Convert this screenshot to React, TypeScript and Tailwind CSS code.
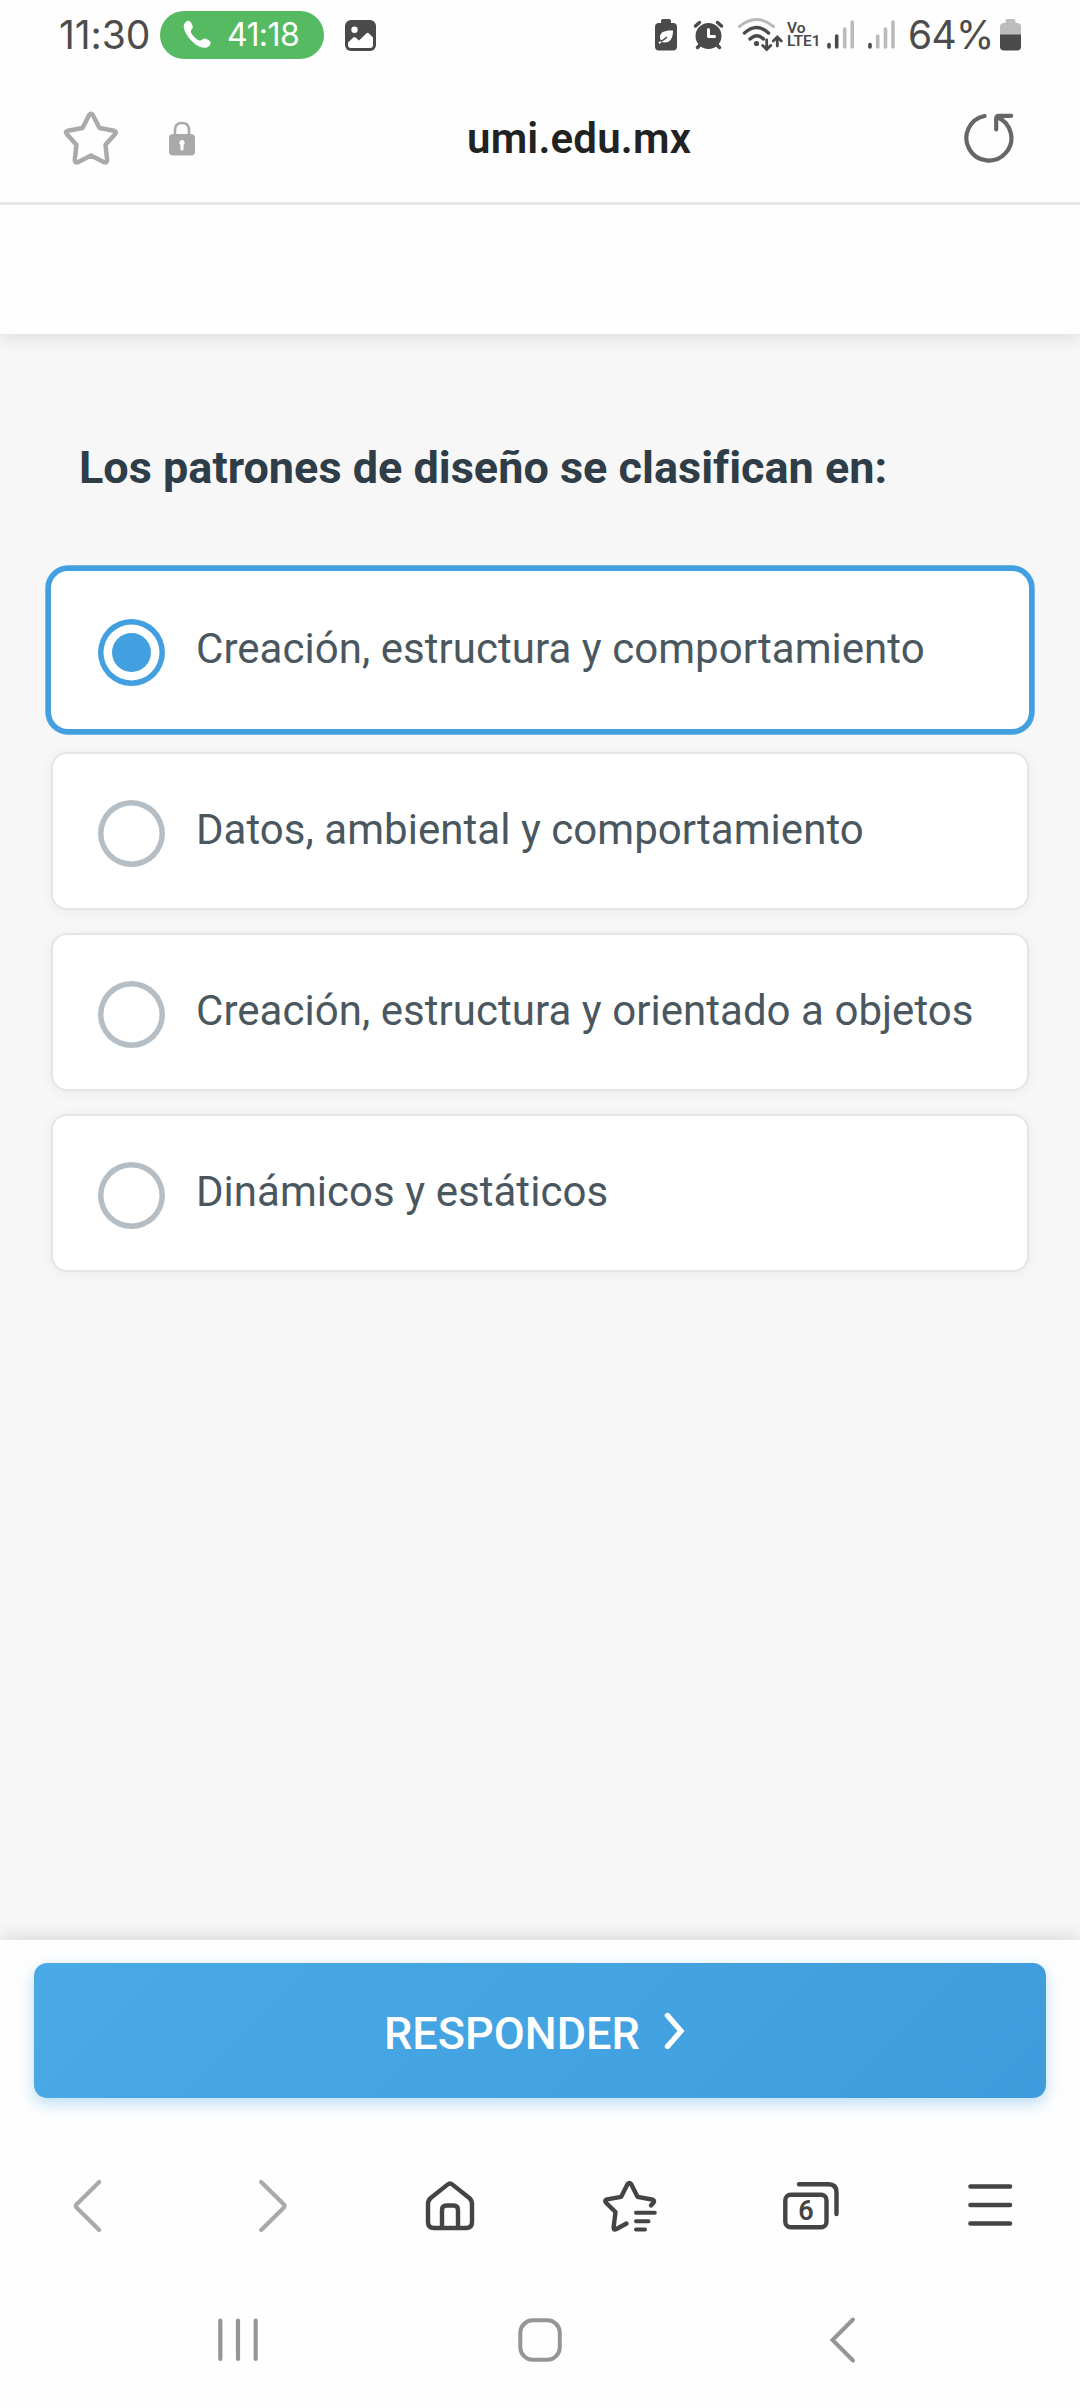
import React from "react";

const INK = "#4a4a4a";

function StatusBar() {
  return (
    <div className="flex h-[70px] shrink-0 items-start font-['Inter',sans-serif] text-[#4c4c4c]">
      <span className="ml-[59px] mt-[11px] w-[101px] whitespace-nowrap text-[39px] leading-[48px] font-normal tracking-[-0.1px]">11:30</span>
      <div className="mt-[11px] flex h-12 w-[164px] items-center rounded-full bg-[#56ba62] text-white">
        <svg className="ml-[22px] h-[30px] w-[30px]" viewBox="0 0 30 30" fill="#fff">
          <path d="M2 4.5C3 2 5.5.3 7.3 1c1.700.7 3.700 4.700 3.500 6.500-.2 1.500-2.200 2.400-2 4 .4 3 6 8.700 9 9 1.600.2 2.600-1.900 4.200-2.100 1.800-.2 5.900 1.800 6.500 3.500.6 2-1.300 4.500-3.500 5.500-3.500 1.500-9.500-.7-14.500-5.700C4.500 16 .5 8.500 2 4.500Z" />
        </svg>
        <span className="ml-[15px] text-[32px] leading-[48px] font-normal tracking-[-0.6px]">41:18</span>
      </div>
      <svg className="ml-[21px] mt-[20px] h-[31px] w-[31px]" viewBox="0 0 31 31">
        <rect width="31" height="31" rx="6" fill={INK} />
        <circle cx="9.500" cy="9.800" r="3.200" fill="#fff" />
        <path d="M3 22.500 8.600 17.300q1-.8 2 .1l3.400 3.200 7.500-7.400q1.200-1 2.300.1L28 17.500V25q0 3-3 3H6q-3 0-3-3Z" fill="#fff" />
      </svg>
      <div className="ml-auto flex items-start">
        <svg className="mt-[19px] h-8 w-[22px]" viewBox="0 0 22 32">
          <path d="M6 4V2q0-2 2-2h6q2 0 2 2v2h2q4 0 4 4v19.500q0 4-4 4H4q-4 0-4-4V8q0-4 4-4Z" fill={INK} />
          <path d="M18 11.500C10 11 5 13 5 18q0 2 1 3.500l-2.500 2 .8 1.500L7 23c5 1.500 11 0 11-11.500Z" fill="#fff" />
          <path d="M5.500 22.500q3.500-1.500 6.500-4.500" fill="none" stroke={INK} strokeWidth="1.500" />
        </svg>
        <svg className="ml-[16px] mt-[20px] h-[30px] w-[31px]" viewBox="0 0 31 30" fill="none" stroke={INK} strokeLinecap="round">
          <circle cx="15.500" cy="16" r="13" fill={INK} stroke="none" />
          <path d="m2.500 6 4-3.500M24.500 2.500l4 3.500M4.500 27.500l3-3M26.500 27.500l-3-3" strokeWidth="3.500" />
          <path d="M15.500 9.500v7h6" stroke="#fff" strokeWidth="3" strokeLinejoin="round" />
        </svg>
        <svg className="ml-[13px] mt-[17px] h-9 w-[46px]" viewBox="737 17 46 36" fill="none" strokeLinecap="round" strokeWidth="3">
          <path d="M739.500 26.500Q756.500 12.500 773.500 26.500" stroke="#b8b8b8" />
          <path d="M744.500 33Q756.500 22 768.500 33M750 39q7-6.500 13.500 0" stroke={INK} strokeWidth="3.400" />
          <circle cx="756.500" cy="43.500" r="2.600" fill={INK} />
          <path d="M766.700 40v9m-4-3.500 4 4 4-4M777.300 46v-8.500m-4 3.500 4-4 4 4" stroke={INK} strokeWidth="2.800" />
        </svg>
        <span className="ml-[4px] mt-[22px] w-[34px] font-['Roboto',sans-serif] text-[15.500px] leading-[13px] font-semibold">
          Vo
          <br />
          LTE1
        </span>
        <svg className="ml-[6px] mt-[19px] h-[31px] w-[68px]" viewBox="827 19 68 31" fill="none" strokeLinecap="round" strokeWidth="3.600">
          <path d="M829 44.500V47M836.700 36v11M870 44.500V47" stroke={INK} />
          <path d="M844.700 29v18M852.200 22v25M877.700 36v11M885.500 29v18M893 22v25" stroke="#bababa" />
        </svg>
        <span className="ml-[13px] mt-[11px] w-[88px] whitespace-nowrap text-[39px] leading-[48px] font-normal tracking-[-0.700px]">64%</span>
        <svg className="mr-[59px] ml-[4px] mt-[19px] h-8 w-[21px]" viewBox="0 0 21 32">
          <path d="M5.500 4V2q0-2 2-2h6q2 0 2 2v2H17q4 0 4 4v8H0V8q0-4 4-4Z" fill="#bdbdbd" />
          <path d="M0 15.500h21v12q0 4-4 4H4q-4 0-4-4Z" fill={INK} />
        </svg>
      </div>
    </div>
  );
}

function AddressBar() {
  return (
    <div className="relative z-20 flex h-[135px] shrink-0 items-start border-b-[3px] border-[#e6e6e6] bg-[#fefefe]">
      <svg className="ml-[62px] mt-[40px] h-[58px] w-[58px]" viewBox="62 110 58 58" fill="none" stroke="#a9abaa" strokeWidth="4.500" strokeLinejoin="round">
        <path d="M89.200 115q1.800-2.600 3.600 0l6.700 13 14.700 2.800q3 .8 1 3.200L105.500 144.700l1.600 15.300q0 3.200-3 2.200L91 155.500l-13.200 6.700q-3 1-3-2.200l1.600-15.300L66.700 134q-2-2.400 1-3.200L82.500 128Z" />
      </svg>
      <svg className="ml-[49px] mt-[51px] h-[35px] w-[26px]" viewBox="0 0 26 35">
        <path d="M6 15V9q0-7 7-7t7 7v6" fill="none" stroke="#a9a9a9" strokeWidth="2.600" />
        <rect y="13" width="26" height="21.500" rx="4" fill="#a9a9a9" />
        <path d="M13 19a2.800 2.800 0 0 1 1.600 5v4a1.600 1.600 0 0 1-3.200 0v-4A2.800 2.800 0 0 1 13 19Z" fill="#fff" />
      </svg>
      <span className="ml-[272px] mt-[44px] w-[226px] whitespace-nowrap font-['Roboto',sans-serif] text-[42px] leading-[50px] font-semibold tracking-[0.200px] text-[#222]">umi.edu.mx</span>
      <svg className="ml-auto mr-[64px] mt-[41px] h-[54px] w-[54px]" viewBox="962 111 54 54" fill="none" stroke="#666" strokeWidth="4.200" strokeLinecap="round">
        <path d="M984.500 116A22.500 22.500 0 1 0 998 117.500" />
        <path d="M996.200 129.500V118.500q0-2.700 2.700-2.700h12.300" strokeLinejoin="round" />
      </svg>
    </div>
  );
}

const answers = [
  "Creación, estructura y comportamiento",
  "Datos, ambiental y comportamiento",
  "Creación, estructura y orientado a objetos",
  "Dinámicos y estáticos",
];

function Answer({ label, selected }: { label: string; selected: boolean }) {
  return (
    <label
      className={
        selected
          ? "flex h-[158px] items-start rounded-[17px] bg-white shadow-[0_0_0_5.7px_#43a0e0]"
          : "flex h-[158px] items-start rounded-[16px] border-2 border-[#e5e5e5] bg-white shadow-[0_2px_14px_rgba(0,0,0,0.05)]"
      }
    >
      <span
        className={
          selected
            ? "mt-12 ml-[47px] flex h-[67px] w-[67px] items-center justify-center rounded-full shadow-[inset_0_0_0_5.5px_#43a0e0]"
            : "mt-[46px] ml-[45px] h-[67px] w-[67px] rounded-full shadow-[inset_0_0_0_5.5px_#b5bec5]"
        }
      >
        {selected && <span className="h-[39px] w-[39px] rounded-full bg-[#43a0e0]" />}
      </span>
      <span
        className={
          selected
            ? "mt-[53px] ml-[31px] whitespace-nowrap text-[42px] leading-[50px] tracking-[0.040px] text-[#4a575f]"
            : "mt-[51px] ml-[31px] whitespace-nowrap text-[42px] leading-[50px] tracking-[0.040px] text-[#4a575f]"
        }
      >
        {label}
      </span>
    </label>
  );
}

function BrowserToolbar() {
  return (
    <div className="relative z-20 flex h-[75px] shrink-0 items-center bg-[#fefefe] pl-[72px]">
      <svg className="h-14 w-8" viewBox="72 2178 32 56" fill="none" stroke="#a9a9a9" strokeWidth="4.200" strokeLinecap="round" strokeLinejoin="round">
        <path d="m99.200 2182-22.500 22.200q-1.600 1.800 0 3.600L99.200 2230" />
      </svg>
      <svg className="ml-[153px] h-14 w-8" viewBox="257 2178 32 56" fill="none" stroke="#a9a9a9" strokeWidth="4.200" strokeLinecap="round" strokeLinejoin="round">
        <path d="m261.200 2182 22.500 22.200q1.600 1.800 0 3.600L261.200 2230" />
      </svg>
      <svg className="ml-[135px] h-14 w-[52px]" viewBox="424 2178 52 56" fill="none" stroke="#444" strokeWidth="4.400">
        <path d="M447.500 2184.600q2.500-2 5 0l16.800 13.400q2.700 2.300 2.700 6v18q0 6-6 6h-32q-6 0-6-6v-18q0-3.700 2.700-6Z" strokeLinejoin="round" />
        <path d="M442 2227v-17q0-4.500 4.500-4.500h7q4.500 0 4.500 4.500v17" />
      </svg>
      <svg className="ml-[124px] h-14 w-[60px]" viewBox="600 2178 60 56" fill="none" stroke="#444" strokeWidth="4.400" strokeLinecap="round" strokeLinejoin="round">
        <path d="m626.500 2223.500-10.500 5.700q-2.400 1-2.400-1.600l1.900-15.600-9.500-9.300q-2-2.400 1-3.300l14.200-2.600 6.400-12.700q1.700-2.400 3.500 0l6.400 12.700 14.300 2.700q3.500.9 1.700 3.300l-2.500 2.600" />
        <path d="M636 2212.700h18.800M636 2221.200h12.500M636 2229.600h9" strokeWidth="4" />
      </svg>
      <div className="relative ml-[121px] h-14 w-[60px]">
        <svg className="h-14 w-[60px]" viewBox="781 2178 60 56" fill="none" stroke="#444" strokeWidth="4.400" strokeLinecap="round">
          <rect x="785.300" y="2194.700" width="41.200" height="32.500" rx="5.500" />
          <path d="M799 2184.300h29.500q8 0 8 8V2214" />
        </svg>
        <span className="absolute top-[18px] left-[4px] w-[42px] text-center text-[27px] leading-[31px] font-semibold text-[#444]">6</span>
      </div>
      <svg className="ml-[125px] h-14 w-12" viewBox="966 2178 48 56" stroke="#444" strokeWidth="4.600" strokeLinecap="round">
        <path d="M970.500 2186.500h39.500M970.500 2205h39.500M970.500 2223.500h39.500" />
      </svg>
    </div>
  );
}

function SystemNavigation() {
  return (
    <div className="flex h-[60px] items-center pl-[216px]">
      <svg className="h-12 w-11" viewBox="216 2316 44 48" stroke="#959595" strokeWidth="4.200" strokeLinecap="round">
        <path d="M220.300 2320.500v38.500M238 2320.500v38.500M255.700 2320.500v38.500" />
      </svg>
      <svg className="ml-[256px] h-12 w-12" viewBox="516 2316 48 48" fill="none" stroke="#959595" strokeWidth="4">
        <rect x="520.300" y="2320.300" width="39.500" height="39.500" rx="12.500" />
      </svg>
      <svg className="ml-[264px] h-12 w-[30px]" viewBox="828 2316 30 48" fill="none" stroke="#959595" strokeWidth="4" strokeLinecap="round">
        <path d="m853 2319.500-20.500 20.500L853 2360.500" />
      </svg>
    </div>
  );
}

export default function App() {
  return (
    <div className="flex h-[2408px] w-[1080px] flex-col overflow-hidden bg-[#fefefe] font-['Roboto',sans-serif]">
      <StatusBar />
      <AddressBar />
      <header className="relative z-10 h-[129px] shrink-0 bg-[#fefefe] shadow-[0_3px_18px_rgba(0,0,0,0.12)]" />
      <main className="h-[1606px] shrink-0 bg-[#f7f7f7] px-[51px] pt-[107px]">
        <h1 className="pl-7 text-[45px] leading-[54px] font-bold whitespace-nowrap text-[#2e3d47] [font-variant-ligatures:none]">Los patrones de diseño se clasifican en:</h1>
        <div className="mt-[76px] flex flex-col gap-[23px]">
          {answers.map((label, i) => (
            <Answer key={label} label={label} selected={i === 0} />
          ))}
        </div>
      </main>
      <footer className="relative z-10 h-[228px] shrink-0 bg-[#fefefe] px-[34px] pt-[23px] shadow-[0_-3px_18px_rgba(0,0,0,0.12)]">
        <button className="flex h-[135px] w-full items-start rounded-[13px] bg-linear-135 from-[#49aae7] to-[#3f9cdc] text-white shadow-[0_6px_16px_rgba(67,160,224,0.35)]">
          <span className="mt-[44px] ml-[350px] text-[45px] leading-[54px] font-medium">RESPONDER</span>
          <svg className="mt-[47px] ml-[23px] h-[42px] w-6" viewBox="0 0 24 42" fill="none" stroke="#fff" strokeWidth="5.400" strokeLinecap="round" strokeLinejoin="miter">
            <path d="m4.500 5.500 13.500 15.500L4.500 36.500" />
          </svg>
        </button>
      </footer>
      <BrowserToolbar />
      <div className="mt-[67px]">
        <SystemNavigation />
      </div>
    </div>
  );
}
